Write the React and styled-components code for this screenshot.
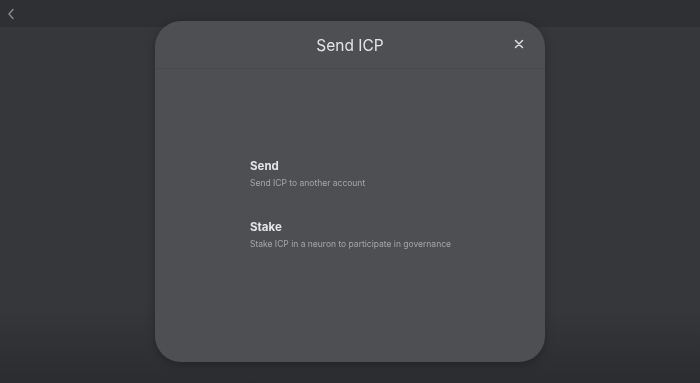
import React from "react";
import styled, { createGlobalStyle } from "styled-components";

const GlobalStyle = createGlobalStyle`
  html, body {
    margin: 0;
    padding: 0;
    height: 100%;
    background: #2e2f33;
    font-family: Inter, "Noto Sans", sans-serif;
  }
  #root {
    height: 100%;
  }
`;

const Page = styled.div`
  height: 383px;
  display: flex;
  flex-direction: column;
  background: linear-gradient(180deg, #36373b 0%, #36373b 80%, #2b2c30 100%);
`;

const TopBar = styled.div`
  height: 27px;
  display: flex;
  align-items: center;
  padding: 0 6px;
  background: #2f3034;
`;

const BackButton = styled.button`
  border: none;
  background: none;
  padding: 0;
  display: flex;
  align-items: center;
  color: #8a8b8f;
  cursor: pointer;
`;

const Main = styled.div`
  flex: 1;
`;

const Overlay = styled.div`
  position: fixed;
  inset: 0;
  display: flex;
  align-items: center;
  justify-content: center;
`;

const Modal = styled.div`
  width: 390px;
  height: 341px;
  border-radius: 26px;
  background: #4e4f53;
  display: flex;
  flex-direction: column;
  box-shadow: 0 2px 10px rgba(0, 0, 0, 0.25);
`;

const Header = styled.div`
  height: 47px;
  display: flex;
  align-items: center;
  justify-content: center;
  position: relative;
  border-bottom: 1px solid #48494d;
`;

const Title = styled.h2`
  margin: 0;
  font-size: 15.5px;
  font-weight: 400;
  color: #e4e4e6;
  padding-top: 1px;
`;

const CloseButton = styled.button`
  position: absolute;
  right: 21px;
  top: 18px;
  border: none;
  background: none;
  padding: 0;
  color: #dcdcde;
  display: flex;
  cursor: pointer;
`;

const Options = styled.div`
  display: flex;
  flex-direction: column;
  gap: 32px;
  padding: 90px 0 0 95px;
`;

const Option = styled.div`
  display: flex;
  flex-direction: column;
  gap: 5px;
  cursor: pointer;
`;

const OptionTitle = styled.div`
  font-size: 11.5px;
  font-weight: 700;
  color: #e6e6e8;
`;

const OptionText = styled.div`
  font-size: 8.5px;
  color: #a6a7ab;
`;

const options = [
  { title: "Send", text: "Send ICP to another account" },
  { title: "Stake", text: "Stake ICP in a neuron to participate in governance" },
];

export default function App() {
  return (
    <>
      <GlobalStyle />
      <Page>
        <TopBar>
          <BackButton aria-label="Back">
            <svg width="10" height="12" viewBox="0 0 10 12" fill="none">
              <path d="M7 1.5L3 6l4 4.5" stroke="currentColor" strokeWidth="1.4" strokeLinecap="round" strokeLinejoin="round" />
            </svg>
          </BackButton>
        </TopBar>
        <Main />
      </Page>
      <Overlay>
        <Modal>
          <Header>
            <Title>Send ICP</Title>
            <CloseButton aria-label="Close">
              <svg width="10" height="10" viewBox="0 0 10 10" fill="none">
                <path d="M1.5 1.5l7 7M8.5 1.5l-7 7" stroke="currentColor" strokeWidth="1.5" strokeLinecap="round" />
              </svg>
            </CloseButton>
          </Header>
          <Options>
            {options.map((o) => (
              <Option key={o.title}>
                <OptionTitle>{o.title}</OptionTitle>
                <OptionText>{o.text}</OptionText>
              </Option>
            ))}
          </Options>
        </Modal>
      </Overlay>
    </>
  );
}
